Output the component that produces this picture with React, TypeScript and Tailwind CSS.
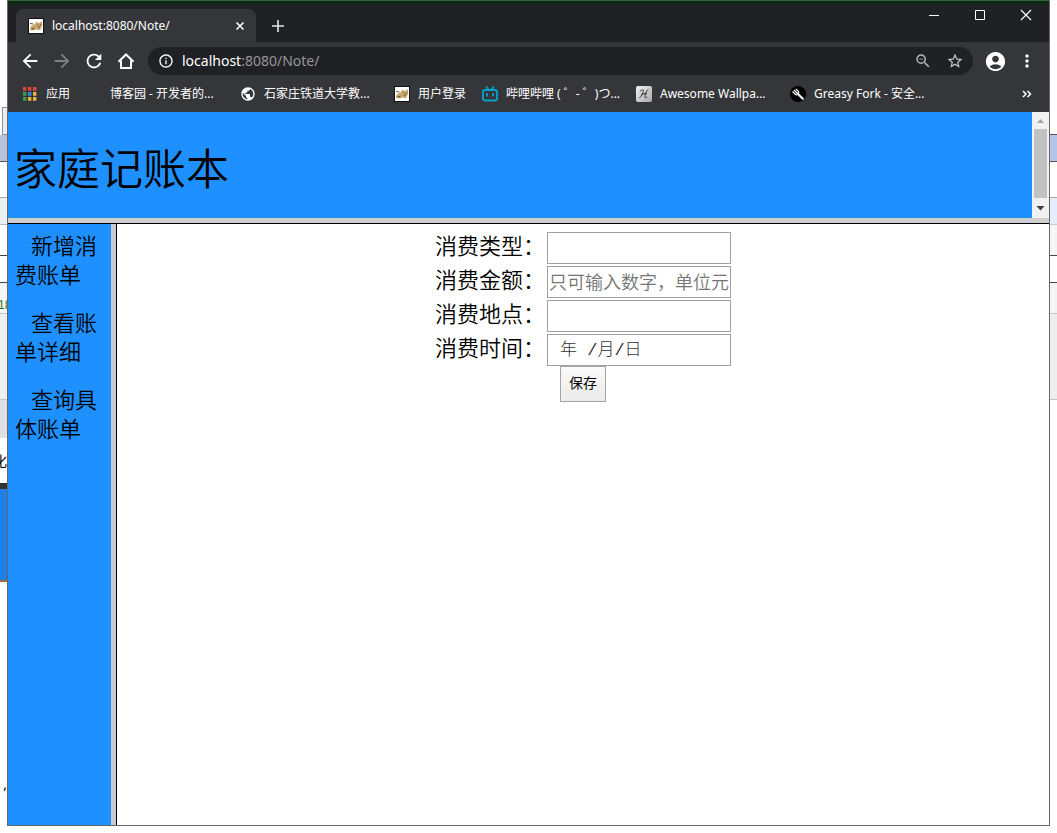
import type { ReactNode } from "react";
import {
  MdAccountCircle,
  MdArrowBack,
  MdArrowForward,
  MdInfoOutline,
  MdMoreVert,
  MdPublic,
  MdRefresh,
  MdStarBorder,
  MdZoomOut,
} from "react-icons/md";

function CatIcon() {
  return (
    <svg viewBox="0 0 16 16" className="size-4 shrink-0" aria-hidden="true">
      <rect x="0.5" y="0.5" width="15" height="15" fill="#fff" stroke="#111" />
      <path d="M2 12c0-3 1.500-5 4.500-5.500L8.500 3.500l1.300 1.300h2L14 3v5.500l-1.500 2 .5 1.500h-3l-1.500-.8L6 12.500z" fill="#c8a868" />
      <path d="M2 5.500l3.500.5M3.500 11l3-.8M9.500 6.800h1M12 6.800h1M10 9h2" stroke="#51442b" strokeWidth="0.9" fill="none" />
    </svg>
  );
}

function AppsIcon() {
  const colors = ["#e0453a", "#e0453a", "#e0453a", "#3f9c55", "#3b82e0", "#e9b43a", "#3f9c55", "#e9b43a", "#e9b43a"];
  return (
    <svg viewBox="0 0 16 16" className="size-4 shrink-0" aria-hidden="true">
      {colors.map((c, i) => (
        <rect key={i} x={1 + (i % 3) * 5} y={1 + Math.floor(i / 3) * 5} width="3.400" height="3.800" fill={c} />
      ))}
    </svg>
  );
}

function TvIcon() {
  return (
    <svg viewBox="0 0 16 16" className="size-4 shrink-0" fill="none" stroke="#06a0c8" strokeWidth="1.900" strokeLinecap="round" aria-hidden="true">
      <rect x="1" y="4" width="14" height="10.500" rx="2" />
      <path d="M4.500 1.200L6.500 3.500M11.500 1.200L9.500 3.500M5 8v1.800M11 8v1.800" />
    </svg>
  );
}

function ScriptIcon() {
  return (
    <svg viewBox="0 0 16 16" className="size-4 shrink-0" aria-hidden="true">
      <defs>
        <linearGradient id="tile" x1="0" y1="0" x2="1" y2="1">
          <stop offset="0" stopColor="#f2f2f2" />
          <stop offset="1" stopColor="#a9a9a9" />
        </linearGradient>
      </defs>
      <rect width="16" height="16" rx="2" fill="url(#tile)" />
      <path d="M4 5.500C4.500 3.800 7.500 3.500 7.500 4.500S6 10 3.500 12M12.500 3.500c-2 .5-3 4-3.600 7-.2 1.500 1 1.500 2.300.5M5 8.500c2-.8 4-.8 6-1" fill="none" stroke="#333" strokeWidth="1" />
    </svg>
  );
}

function ForkIcon() {
  return (
    <svg viewBox="0 0 16 16" className="size-4 shrink-0" aria-hidden="true">
      <circle cx="8" cy="8" r="8" fill="#000" />
      <path d="M7.500 7.500l5.300 5.300" stroke="#fff" strokeWidth="2" strokeLinecap="round" />
      <path d="M2.500 5.500l3 3M4 4l3.500 3.500M5.800 2.800l3 3M5.500 8.500c1.500 1 3.500-.8 3.300-2.700" fill="none" stroke="#fff" strokeWidth="1.200" />
    </svg>
  );
}

function HomeIcon() {
  return (
    <svg viewBox="0 0 18 18" className="size-[18px]" fill="none" stroke="currentColor" strokeWidth="2" aria-hidden="true">
      <path d="M1.500 9.800L9 2.500l7.500 7.300M4 8.500V16h10V8.500" />
    </svg>
  );
}

function ToolButton({ label, dim, children }: { label: string; dim?: boolean; children: ReactNode }) {
  return (
    <button
      type="button"
      aria-label={label}
      className={`flex h-8 w-8 shrink-0 items-center justify-center ${dim ? "text-[#7f8083]" : "text-white"}`}
    >
      {children}
    </button>
  );
}

const bookmarks = [
  { label: "应用", width: "w-16", icon: <AppsIcon /> },
  { label: "博客园 - 开发者的...", width: "w-[154px]", icon: <span className="size-4 shrink-0" /> },
  { label: "石家庄铁道大学教...", width: "w-[154px]", icon: <MdPublic className="size-4 shrink-0" /> },
  { label: "用户登录", width: "w-[88px]", icon: <CatIcon /> },
  { label: "哔哩哔哩 ( ゜- ゜)つ...", width: "w-[154px]", icon: <TvIcon /> },
  { label: "Awesome Wallpa...", width: "w-[154px]", icon: <ScriptIcon /> },
  { label: "Greasy Fork - 安全...", width: "w-[154px]", icon: <ForkIcon /> },
];

function Browser() {
  return (
    <header className="shrink-0 border-t border-[#33663a] bg-[#35363a] text-white">
      <div className="flex h-[41px] border-t-4 border-[#12291a] bg-[#202124] pl-2">
        <div className="mt-1 flex w-60 items-center rounded-t-lg bg-[#35363a] px-3 pt-px text-xs">
          <CatIcon />
          <span className="ml-2 flex-1">localhost:8080/Note/</span>
          <button type="button" aria-label="关闭标签页" className="-mr-1 flex size-4 items-center justify-center">
            <svg viewBox="0 0 16 16" className="size-4" stroke="#fff" strokeWidth="1.600"><path d="M4.500 4.500l7 7M11.500 4.500l-7 7" /></svg>
          </button>
        </div>
        <button type="button" aria-label="新标签页" className="ml-3 mt-1 flex w-5 items-center justify-center">
          <svg viewBox="0 0 16 16" className="size-4" stroke="#e4e4e4" strokeWidth="1.600"><path d="M8 2v12M2 8h12" /></svg>
        </button>
        <div className="ml-auto flex h-5">
          <button type="button" aria-label="最小化" className="flex w-[46px] items-center justify-center">
            <svg viewBox="0 0 12 12" className="size-3" stroke="#fff"><path d="M1 6.500h10" /></svg>
          </button>
          <button type="button" aria-label="最大化" className="flex w-[46px] items-center justify-center">
            <svg viewBox="0 0 12 12" className="size-3" fill="none" stroke="#fff"><path d="M1.500 1.500h9v9h-9z" /></svg>
          </button>
          <button type="button" aria-label="关闭" className="flex w-[46px] items-center justify-center">
            <svg viewBox="0 0 12 12" className="size-3" stroke="#fff" strokeWidth="1.200"><path d="M1 1l10 10M11 1L1 11" /></svg>
          </button>
        </div>
      </div>
      <div className="flex h-[38px] items-center px-1.5">
        <ToolButton label="后退"><MdArrowBack className="size-[22px]" /></ToolButton>
        <ToolButton label="前进" dim><MdArrowForward className="size-[22px]" /></ToolButton>
        <ToolButton label="刷新"><MdRefresh className="size-[22px]" /></ToolButton>
        <ToolButton label="主页"><HomeIcon /></ToolButton>
        <div className="mx-1.5 flex h-7 min-w-0 flex-1 items-center rounded-full bg-[#202124] pl-2.5 pr-0.5">
          <MdInfoOutline className="size-4 shrink-0" />
          <div className="ml-2 flex-1 text-sm">
            localhost<span className="text-[#96979a]">:8080/Note/</span>
          </div>
          <button type="button" aria-label="缩放" className="flex h-7 w-8 items-center justify-center text-[#b5b6b8]"><MdZoomOut className="size-[18px]" /></button>
          <button type="button" aria-label="收藏" className="flex h-7 w-8 items-center justify-center text-[#c8c9cb]"><MdStarBorder className="size-[18px]" /></button>
        </div>
        <ToolButton label="用户"><MdAccountCircle className="size-[23px]" /></ToolButton>
        <ToolButton label="菜单"><MdMoreVert className="size-5" /></ToolButton>
      </div>
      <nav aria-label="书签" className="flex h-8 items-center overflow-hidden pb-1 pl-3.5 pr-4 text-xs">
        {bookmarks.map((b) => (
          <a key={b.label} href="#" className={`flex shrink-0 items-center gap-2 whitespace-pre ${b.width}`}>
            {b.icon}
            {b.label}
          </a>
        ))}
        <button type="button" aria-label="更多书签" className="ml-auto">
          <svg viewBox="0 0 12 12" className="size-3" fill="none" stroke="#fff" strokeWidth="1.500"><path d="M2 3l3 3-3 3M6.500 3l3 3-3 3" /></svg>
        </button>
      </nav>
    </header>
  );
}

const links = ["新增消费账单", "查看账单详细", "查询具体账单"];

const fields = [
  { id: "type", label: "消费类型：", placeholder: "", style: "text-lg px-px" },
  { id: "amount", label: "消费金额：", placeholder: "只可输入数字，单位元", style: "text-lg px-px" },
  { id: "place", label: "消费地点：", placeholder: "", style: "text-lg px-px" },
  {
    id: "date",
    label: "消费时间：",
    placeholder: "年 /月/日",
    style: "pl-3 text-[17px] font-light placeholder:text-[#333] font-['Liberation_Mono','Noto_Sans_CJK_SC',monospace]",
  },
];

function Ledger() {
  return (
    <div className="flex flex-1 flex-col font-[350] text-black">
      <div className="flex h-[111px] shrink-0 border-b-[5px] border-[#d0cfd0]">
        <div className="flex flex-1 items-center bg-[#1e90ff] px-1.5 pt-2">
          <h1 className="text-[43px] leading-[58px]">家庭记账本</h1>
        </div>
        <div className="flex w-[17px] flex-col items-center justify-between bg-[#f1f1f1]" aria-hidden="true">
          <svg viewBox="0 0 17 17" className="size-[17px]"><path d="M5 11h7L8.500 7z" fill="#a3a3a3" /></svg>
          <div className="w-[13px] flex-1 bg-[#c1c1c1]" />
          <svg viewBox="0 0 17 20" className="h-5 w-[17px]"><path d="M4.500 8h8l-4 4.500z" fill="#404040" /></svg>
        </div>
      </div>
      <div className="flex flex-1 border-t border-black">
        <nav aria-label="账单" className="flex w-[108px] shrink-0 flex-col gap-[19px] border-r-[5px] border-[#c8cbd0] bg-[#1e90ff] px-[7px] pt-[7px]">
          {links.map((text) => (
            <a key={text} href="#" className="block indent-4 text-[22px] leading-[29px]">{text}</a>
          ))}
        </nav>
        <main className="flex-1 border-l border-black bg-white pt-2">
          <form className="flex flex-col items-center" onSubmit={(e) => e.preventDefault()}>
            <div className="flex flex-col gap-0.5">
              {fields.map((f) => (
                <div key={f.id} className="flex items-center">
                  <label htmlFor={f.id} className="w-28 pb-1.5 text-[22px] leading-[26px]">{f.label}</label>
                  <input
                    id={f.id}
                    type="text"
                    placeholder={f.placeholder}
                    className={`h-8 w-[184px] border border-[#a0a0a0] bg-white ${f.id === "date" ? "" : "placeholder:text-[#757575]"} ${f.style}`}
                  />
                </div>
              ))}
            </div>
            <button type="submit" className="h-9 border border-[#a5a5a5] bg-linear-to-b from-[#fafafa] to-[#ebebeb] px-2 pb-0.5 text-sm font-normal">保存</button>
          </form>
        </main>
      </div>
    </div>
  );
}

function LeftEdge() {
  return (
    <div className="w-[7px] shrink-0 overflow-hidden whitespace-nowrap" aria-hidden="true">
      <div className="h-[107px]" />
      <div className="ml-0.5 h-7 border-b border-l border-t border-[#8c9296] bg-[#e7edf1]" />
      <div className="h-[27px] border-b border-[#555] bg-[#b5c3df]" />
      <div className="h-9 border-b border-[#aaa]" />
      <div className="h-[27px] border-b border-[#bbb] bg-[#eaf1f3]" />
      <div className="h-[31px] border-b border-[#444]" />
      <div className="h-[27px] border-b border-[#444]" />
      <div className="-ml-0.5 flex h-[31px] items-end border-b border-[#c5c5c5] bg-[#f5f5f5] font-['Liberation_Sans',sans-serif] text-xs text-[#2a7a2a]">18</div>
      <div className="h-[86px] border-b border-[#c5c5c5] bg-[#f0f0f0]" />
      <div className="h-[38px] bg-[#e0dfe6]" />
      <div className="flex h-[45px] items-center justify-end text-sm">化</div>
      <div className="h-1.5 bg-[#333]" />
      <div className="h-[93px] border-b-2 border-[#a86a3c] bg-[#1e80e8]" />
      <div className="flex h-[212px] items-end justify-end text-sm">,</div>
    </div>
  );
}

function RightEdge() {
  return (
    <div className="w-[7px] shrink-0" aria-hidden="true">
      <div className="h-[135px] border-b border-[#555]" />
      <div className="h-[27px] border-b border-[#555] bg-[#b3c4e4]" />
      <div className="h-9 border-b border-[#aaa]" />
      <div className="h-[27px] border-b border-[#ccc] bg-[#e3eefb]" />
      <div className="h-[31px] border-b border-[#444] bg-[#f5f5f5]" />
      <div className="h-[27px] border-b border-[#444]" />
      <div className="h-[31px] border-b border-[#c5c5c5] bg-[#f5f5f5]" />
      <div className="h-[86px] border-b border-[#c5c5c5] bg-[#eee]" />
    </div>
  );
}

export default function App() {
  return (
    <div className="flex min-h-screen bg-white font-['Noto_Sans','Noto_Sans_CJK_SC',sans-serif]">
      <LeftEdge />
      <div className="mb-[7px] flex min-w-0 flex-1 flex-col border-x border-b border-[#666]">
        <Browser />
        <Ledger />
      </div>
      <RightEdge />
    </div>
  );
}
